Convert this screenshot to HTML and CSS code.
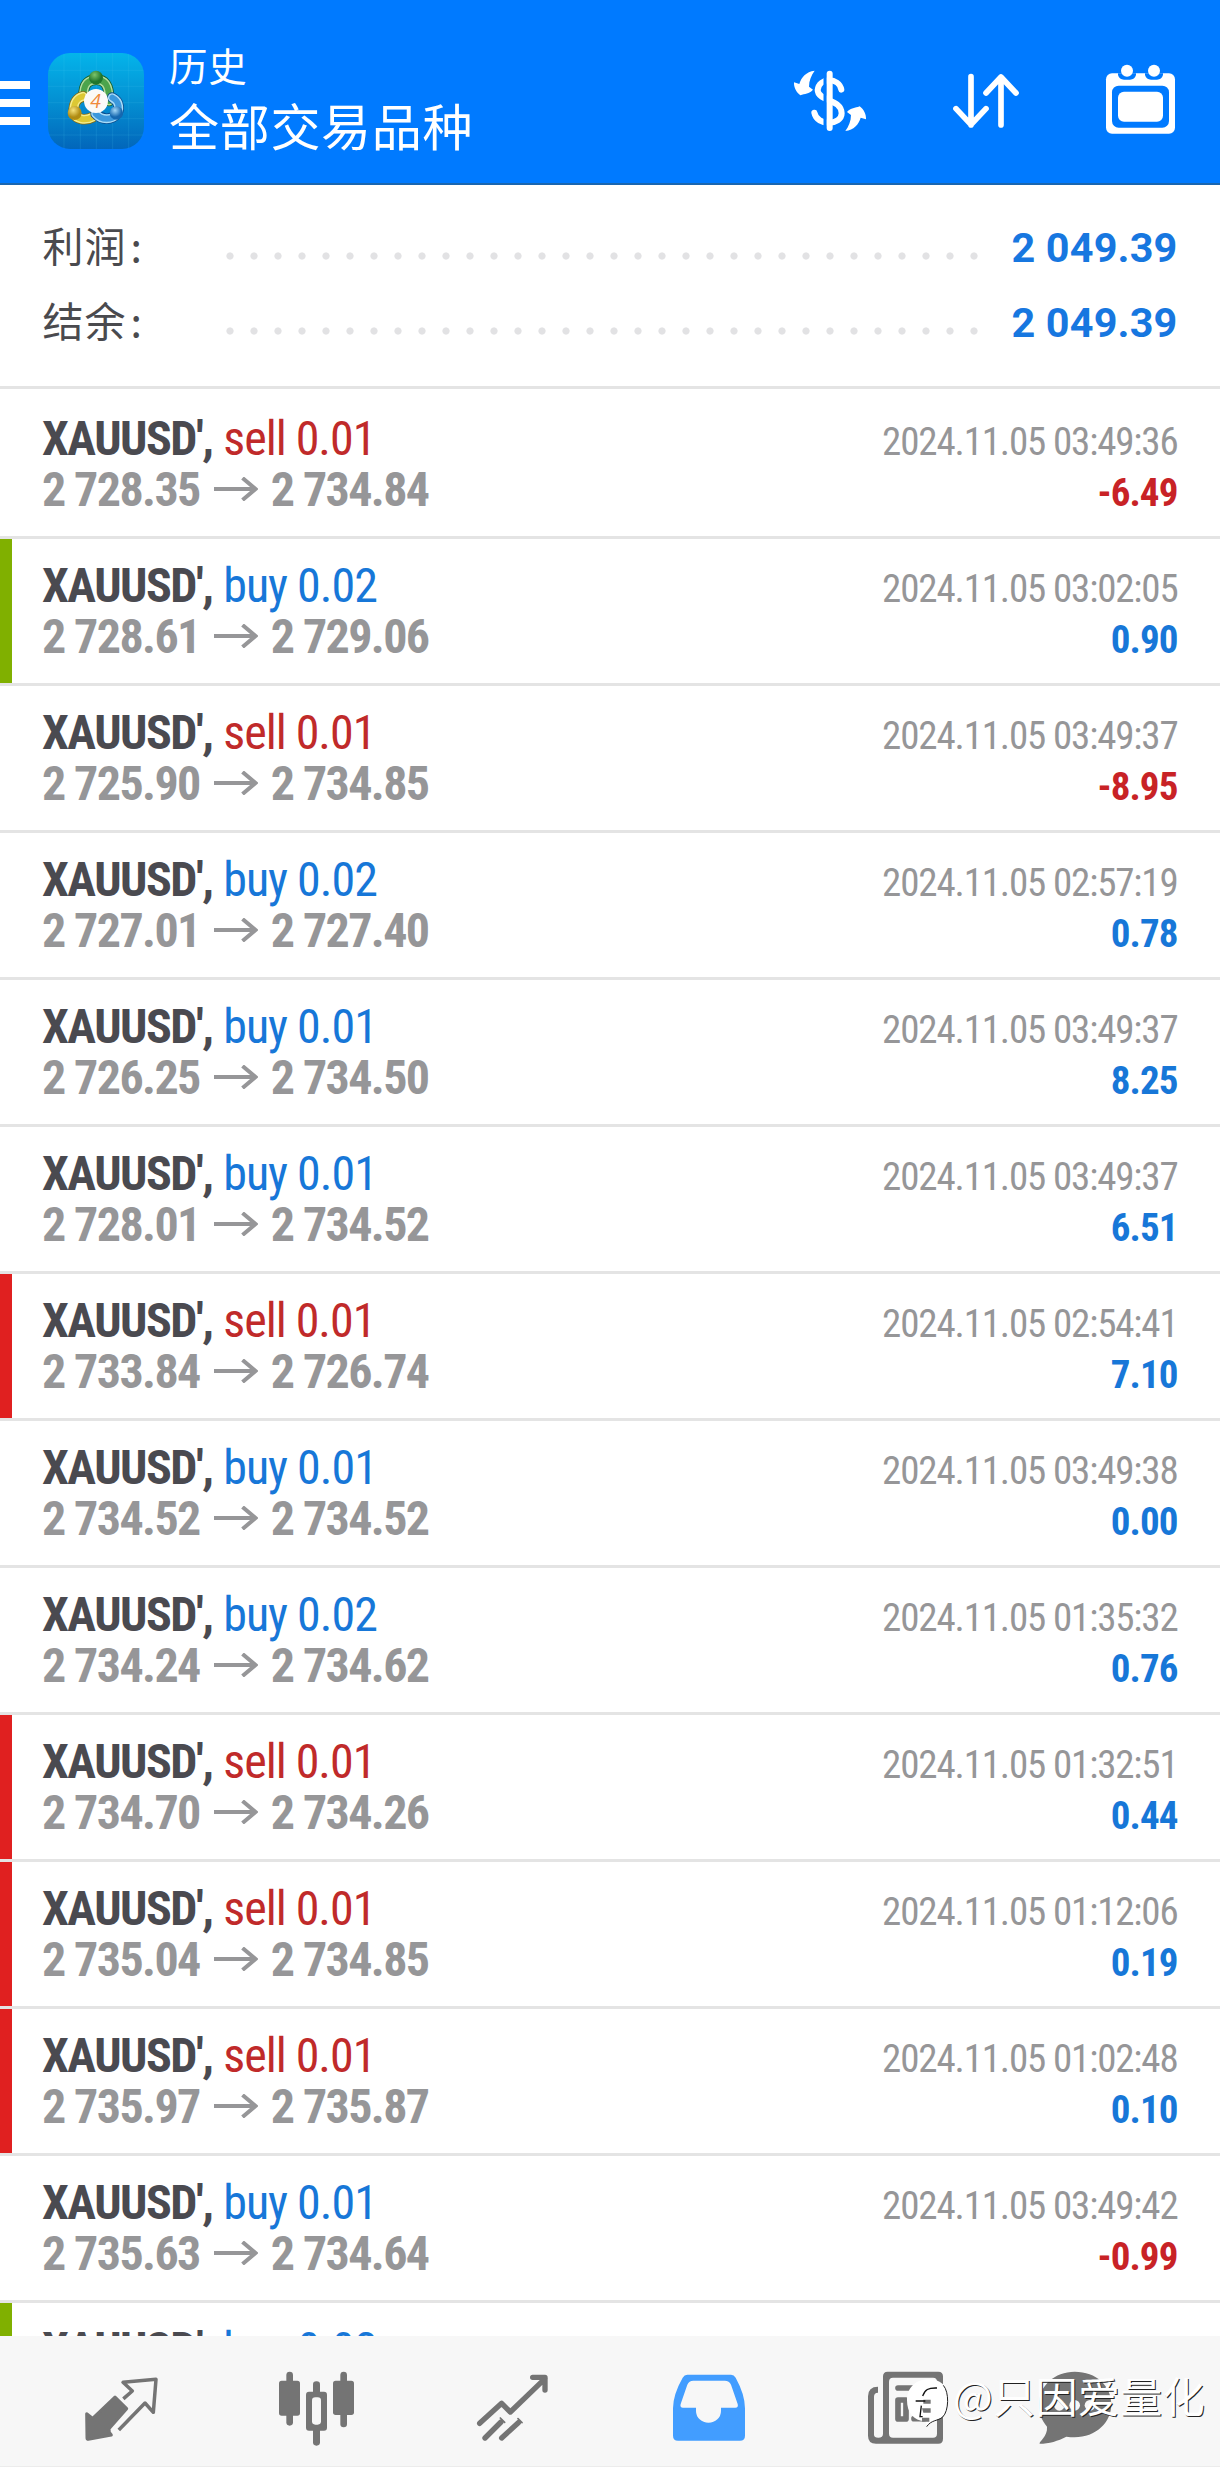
FILE: index.html
```html
<!DOCTYPE html>
<html lang="zh-CN">
<head>
<meta charset="utf-8">
<title>历史</title>
<link rel="stylesheet" href="styles.css">
</head>
<body>
<svg class="defs" width="0" height="0" aria-hidden="true">
  <symbol id="arrow" viewBox="0 0 44 24"><path d="M0 12H41M28.500 1L41.500 12L28.500 23" fill="none" stroke="#969698" stroke-width="4"/></symbol>
</svg>
<div class="app">
  <header class="topbar">
    <svg class="menu" width="30" height="44" viewBox="0 0 30 44"><path d="M0 0h30v8H0zM0 18h30v8H0zM0 36h30v8H0z" fill="#fff"/></svg>
    <svg class="logo" width="96" height="96" viewBox="145 158 288 288">
      <defs>
        <linearGradient id="bg" x1="0" y1="0" x2="0" y2="1"><stop offset="0" stop-color="#04b4ea"/><stop offset=".5" stop-color="#0490d2"/><stop offset="1" stop-color="#0266ba"/></linearGradient>
        <radialGradient id="gr" cx=".4" cy=".3"><stop offset="0" stop-color="#7cc46a"/><stop offset="1" stop-color="#20762c"/></radialGradient>
        <radialGradient id="ye" cx=".4" cy=".3"><stop offset="0" stop-color="#f6e27a"/><stop offset="1" stop-color="#b08c12"/></radialGradient>
        <radialGradient id="bl" cx=".4" cy=".3"><stop offset="0" stop-color="#a4d8f8"/><stop offset="1" stop-color="#1668b0"/></radialGradient>
      </defs>
      <rect x="145" y="158" width="288" height="288" rx="66" fill="url(#bg)"/>
      <path d="M193 160v284M242 158v288M290 158v288M339 158v288M387 160v284M147 210h284M145 258h288M145 307h288M145 355h288M147 404h284" stroke="#5cd0f4" stroke-opacity=".22" stroke-width="2"/>
      <g fill="none" stroke-linecap="round">
        <path d="M252 290C250 248 268 238 290 238S330 250 328 302" stroke="#14602a" stroke-width="32"/>
        <path d="M252 290C250 248 268 238 290 238S330 250 328 302" stroke="#b4dca0" stroke-width="27"/>
        <path d="M252 290C250 248 268 238 290 238S330 250 328 302" stroke="#4ca44c" stroke-width="18"/>
        <path d="M250 288C220 296 222 325 222 338C230 358 258 362 280 350" stroke="#806a10" stroke-width="32"/>
        <path d="M250 288C220 296 222 325 222 338C230 358 258 362 280 350" stroke="#f4ec8c" stroke-width="27"/>
        <path d="M250 288C220 296 222 325 222 338C230 358 258 362 280 350" stroke="#dcc834" stroke-width="18"/>
        <path d="M338 292C362 304 360 330 350 342C336 360 306 360 288 340" stroke="#0c4c8c" stroke-width="32"/>
        <path d="M338 292C362 304 360 330 350 342C336 360 306 360 288 340" stroke="#a8dcf8" stroke-width="27"/>
        <path d="M338 292C362 304 360 330 350 342C336 360 306 360 288 340" stroke="#3c98dc" stroke-width="18"/>
      </g>
      <circle cx="289" cy="232" r="21" fill="url(#gr)"/>
      <circle cx="225" cy="338" r="21" fill="url(#ye)"/>
      <circle cx="350" cy="338" r="20" fill="url(#bl)"/>
      <circle cx="289" cy="302" r="36" fill="#fbfaf8"/>
      <text class="logo-num" x="288" y="323" text-anchor="middle">4</text>
    </svg>
    <div class="heading">
      <div class="sub">历史</div>
      <div class="title">全部交易品种</div>
    </div>
    <div class="actions">
      <svg width="74" height="64" viewBox="100 207 222 192" fill="none">
        <path d="M245 269C238 231 178 232 174 270C174 304 246 296 246 340C246 376 172 380 164 338" stroke="#fff" stroke-width="18" stroke-linecap="round"/>
        <path d="M196.500 225V385" stroke="#007aff" stroke-width="10"/>
        <path d="M210 221V384" stroke="#fff" stroke-width="18" stroke-linecap="round"/>
        <path id="curl" d="M165 212C139 215 125 232 119 252L103 247C102 262 110 277 122 286C136 280 148 282 160 269L148 260C148 242 155 225 165 212Z" fill="#fff"/>
        <use href="#curl" transform="rotate(180 211 302.500)"/>
      </svg>
      <svg width="68" height="58" viewBox="576 216 204 174" fill="none" stroke="#fff" stroke-width="17" stroke-linecap="round" stroke-linejoin="round">
        <path d="M633 230V375M588 326L633 374L678 326M723 375V231M678 279L723 231L768 279"/>
      </svg>
      <svg class="calendar" width="71" height="71" viewBox="1035 193 213 213">
        <rect x="1038" y="221" width="207" height="181" rx="18" fill="#fff"/>
        <path d="M1074 221H1128V226Q1124 240 1110 240H1092Q1078 240 1074 226ZM1155 221H1209V226Q1205 240 1191 240H1173Q1159 240 1155 226Z" fill="#007aff"/>
        <circle cx="1101" cy="213" r="18" fill="#fff"/><circle cx="1182" cy="213" r="18" fill="#fff"/>
        <rect x="1056" y="258" width="171" height="126" rx="20" fill="#007aff"/>
        <rect x="1074" y="276" width="135" height="90" rx="18" fill="#fff"/>
      </svg>
    </div>
  </header>

  <section class="summary">
    <div class="sum"><span class="label">利润<i>:</i></span><span class="dots"></span><b>2 049.39</b></div>
    <div class="sum"><span class="label">结余<i>:</i></span><span class="dots"></span><b>2 049.39</b></div>
  </section>

  <main class="deals">
    <article class="deal"><div class="line"><p><b>XAUUSD',</b><span class="sell">sell 0.01</span></p><time>2024.11.05 03:49:36</time></div><div class="line"><p class="price">2 728.35<svg><use href="#arrow"/></svg>2 734.84</p><strong class="loss">-6.49</strong></div></article>
    <article class="deal tp"><div class="line"><p><b>XAUUSD',</b><span class="buy">buy 0.02</span></p><time>2024.11.05 03:02:05</time></div><div class="line"><p class="price">2 728.61<svg><use href="#arrow"/></svg>2 729.06</p><strong>0.90</strong></div></article>
    <article class="deal"><div class="line"><p><b>XAUUSD',</b><span class="sell">sell 0.01</span></p><time>2024.11.05 03:49:37</time></div><div class="line"><p class="price">2 725.90<svg><use href="#arrow"/></svg>2 734.85</p><strong class="loss">-8.95</strong></div></article>
    <article class="deal"><div class="line"><p><b>XAUUSD',</b><span class="buy">buy 0.02</span></p><time>2024.11.05 02:57:19</time></div><div class="line"><p class="price">2 727.01<svg><use href="#arrow"/></svg>2 727.40</p><strong>0.78</strong></div></article>
    <article class="deal"><div class="line"><p><b>XAUUSD',</b><span class="buy">buy 0.01</span></p><time>2024.11.05 03:49:37</time></div><div class="line"><p class="price">2 726.25<svg><use href="#arrow"/></svg>2 734.50</p><strong>8.25</strong></div></article>
    <article class="deal"><div class="line"><p><b>XAUUSD',</b><span class="buy">buy 0.01</span></p><time>2024.11.05 03:49:37</time></div><div class="line"><p class="price">2 728.01<svg><use href="#arrow"/></svg>2 734.52</p><strong>6.51</strong></div></article>
    <article class="deal sl"><div class="line"><p><b>XAUUSD',</b><span class="sell">sell 0.01</span></p><time>2024.11.05 02:54:41</time></div><div class="line"><p class="price">2 733.84<svg><use href="#arrow"/></svg>2 726.74</p><strong>7.10</strong></div></article>
    <article class="deal"><div class="line"><p><b>XAUUSD',</b><span class="buy">buy 0.01</span></p><time>2024.11.05 03:49:38</time></div><div class="line"><p class="price">2 734.52<svg><use href="#arrow"/></svg>2 734.52</p><strong>0.00</strong></div></article>
    <article class="deal"><div class="line"><p><b>XAUUSD',</b><span class="buy">buy 0.02</span></p><time>2024.11.05 01:35:32</time></div><div class="line"><p class="price">2 734.24<svg><use href="#arrow"/></svg>2 734.62</p><strong>0.76</strong></div></article>
    <article class="deal sl"><div class="line"><p><b>XAUUSD',</b><span class="sell">sell 0.01</span></p><time>2024.11.05 01:32:51</time></div><div class="line"><p class="price">2 734.70<svg><use href="#arrow"/></svg>2 734.26</p><strong>0.44</strong></div></article>
    <article class="deal sl"><div class="line"><p><b>XAUUSD',</b><span class="sell">sell 0.01</span></p><time>2024.11.05 01:12:06</time></div><div class="line"><p class="price">2 735.04<svg><use href="#arrow"/></svg>2 734.85</p><strong>0.19</strong></div></article>
    <article class="deal sl"><div class="line"><p><b>XAUUSD',</b><span class="sell">sell 0.01</span></p><time>2024.11.05 01:02:48</time></div><div class="line"><p class="price">2 735.97<svg><use href="#arrow"/></svg>2 735.87</p><strong>0.10</strong></div></article>
    <article class="deal"><div class="line"><p><b>XAUUSD',</b><span class="buy">buy 0.01</span></p><time>2024.11.05 03:49:42</time></div><div class="line"><p class="price">2 735.63<svg><use href="#arrow"/></svg>2 734.64</p><strong class="loss">-0.99</strong></div></article>
    <article class="deal tp"><div class="line"><p><b>XAUUSD',</b><span class="buy">buy 0.02</span></p></div></article>
  </main>

  <nav class="tabs">
    <svg class="quotes" width="75" height="75" viewBox="252 274 225 225">
      <path d="M345 352L380 387L327 447L328 458L334 466L265 479Q261 479 261 475L260 402L278 416Z" fill="#747474" stroke="#747474" stroke-width="9" stroke-linejoin="round"/>
      <path d="M374 354L397 334L369 308L468 299L460 398L435 370L360 447" fill="none" stroke="#747474" stroke-width="10.500" stroke-linejoin="round" stroke-linecap="square"/>
    </svg>
    <svg class="chart" width="77" height="75" viewBox="834 274 231 225" fill="#747474">
      <rect x="859" y="276" width="20" height="162" rx="10"/><rect x="837" y="303" width="63" height="105" rx="8"/>
      <rect x="1021" y="276" width="20" height="167" rx="10"/><rect x="999" y="303" width="63" height="103" rx="8"/>
      <rect x="939" y="305" width="21" height="193" rx="10"/><rect x="918" y="336" width="63" height="117" rx="9"/>
      <rect x="936" y="353" width="27" height="82" rx="10" fill="#f7f7f7"/>
    </svg>
    <svg class="trade" width="73" height="75" viewBox="228 274 219 225" fill="none" stroke="#747474" stroke-width="16" stroke-linecap="round" stroke-linejoin="round">
      <path d="M239 431L305 371L331 397L435 297M398 293H435V331M255 475L303 427M305 475L355 429"/>
      <path d="M301 415L314 428M354 417L366 429" stroke-width="5"/>
    </svg>
    <svg class="history" width="74" height="75" viewBox="816 274 222 225">
      <path d="M862 285H993Q1002 285 1007 294Q1035 345 1035 386V468Q1035 483 1020 483H834Q819 483 819 468V386Q819 345 848 294Q853 285 862 285Z" fill="#429dff"/>
      <path d="M880 303H974Q988 303 993 315L1013 373Q1016 384 1006 384H963V394A37 35 0 0 1 888 394V384H849Q839 384 842 373L862 315Q867 303 880 303Z" fill="#f7f7f7"/>
    </svg>
    <svg class="news" width="77" height="75" viewBox="201 274 231 225">
      <path d="M234 321V339Q222 339 222 351V465Q222 474 235 474Q249 474 249 462V290Q249 276 263 276H415Q429 276 429 290V477Q429 492 415 492H228Q204 492 204 468V350Q204 321 234 321Z" fill="#747474"/>
      <rect x="267" y="294" width="144" height="180" rx="12" fill="#f7f7f7"/>
      <path d="M294 325H385M294 361V418H318V361Z M342 363H385M342 390H385M342 417H385" fill="none" stroke="#747474" stroke-width="17" stroke-linecap="round" stroke-linejoin="round"/>
    </svg>
    <svg class="chat" width="74" height="75" viewBox="715 274 222 225">
      <path d="M825 276C890 276 935 318 935 374C935 435 877 484 800 471C775 484 748 492 720 492C716 487 745 470 742 441C725 420 718 402 718 374C718 318 765 276 825 276Z" fill="#747474"/>
      <g fill="#f7f7f7"><circle cx="779" cy="377" r="16"/><circle cx="825" cy="377" r="16"/><circle cx="871" cy="377" r="16"/></g>
    </svg>
  </nav>

  <div class="mark">
    <svg width="45" height="52" viewBox="135 50 135 156" fill="none">
      <path d="M205 57C240 57 263 75 264 110C264 150 262 172 222 181Q207 184 201 198L196 183C160 182 141 155 141 120C141 82 168 57 205 57Z" fill="#fff"/>
      <path d="M250 75C268 95 267 152 248 170C235 182 214 178 200 199" stroke="#222" stroke-width="3"/>
      <path d="M190 118H212V130H190ZM186 144H212V157H190ZM186 172H208V184H186Z" fill="#747474"/>
      <path d="M188 107C195 88 204 82 231 83M167 122H196M184 136L180 169H188" stroke="#111" stroke-width="4"/>
    </svg>
    <span>@只因爱量化</span>
  </div>
</div>
</body>
</html>
```
FILE: styles.css
```css
* { box-sizing: border-box; }
body { margin: 0; background: #fff; }
p { margin: 0; }
i { font-style: normal; }
svg { display: block; flex: none; }
.defs { position: absolute; }

.app {
  position: relative;
  display: flex;
  flex-direction: column;
  width: 1220px;
  height: 2467px;
  overflow: hidden;
  font-family: "Roboto", "Noto Sans CJK SC", sans-serif;
}

/* header */
.topbar {
  display: flex;
  align-items: center;
  flex: none;
  height: 185px;
  padding: 19px 44px 0 0;
  background: #007aff;
  border-bottom: 2px solid #1a66b0;
  color: #fff;
}
.menu { margin-top: 4px; }
.logo { margin-left: 18px; }
.logo-num { font: italic 500 58px "Open Sans", sans-serif; fill: #f08a3c; }
.heading {
  margin: 0 0 15px 25px;
  font-family: "Noto Sans CJK SC", sans-serif;
  white-space: nowrap;
}
.sub { font-size: 38.5px; line-height: 60px; letter-spacing: .8px; }
.title { font-size: 50px; line-height: 60px; letter-spacing: .7px; }
.actions { display: flex; align-items: center; gap: 85px; margin-left: auto; }
.calendar { margin-top: -3px; }

/* totals */
.summary {
  flex: none;
  height: 204px;
  padding: 22px 42.5px 0;
  border-bottom: 3px solid #e4e4e4;
}
.sum { display: flex; align-items: baseline; height: 75px; line-height: 75px; }
.label {
  width: 175.5px;
  color: #4a4a4e;
  font-family: "Noto Sans CJK SC", sans-serif;
  font-size: 41px;
  letter-spacing: 1px;
}
.label i { margin-left: 4px; }
.dots {
  align-self: flex-start;
  width: 768px;
  height: 8px;
  margin-top: 45px;
  background: radial-gradient(circle at 12px 4px, #e2e2e4 3.2px, transparent 4px) 0 0 / 24px 8px repeat-x;
}
.sum b { margin-left: auto; font-size: 41.4px; letter-spacing: .15px; color: #1777e0; }

/* deals */
.deals { flex: 1; min-height: 0; overflow: hidden; padding-top: 3px; }
.deal {
  display: flow-root;
  height: 147px;
  padding: 21px 42.5px 0 30px;
  border-bottom: 3px solid #e4e4e4;
  background: linear-gradient(var(--flag, transparent), var(--flag, transparent)) 0 0 / 12px 100% no-repeat;
  background-origin: border-box;
  background-clip: padding-box;
}
.tp { --flag: #80b000; }
.sl { --flag: #e02020; }
.line {
  display: flex;
  align-items: baseline;
  justify-content: space-between;
  height: 51px;
  padding-left: 12px;
  font-family: "Roboto Condensed", "Roboto", sans-serif;
  font-size: 48px;
  line-height: 51px;
  white-space: nowrap;
}
.line b { color: #4a4a50; letter-spacing: -1.5px; }
.buy, .sell { margin-left: 10.8px; letter-spacing: -1px; }
.buy { color: #1777d8; }
.sell { color: #c02a2a; }
.price { display: flex; color: #969698; font-weight: 700; letter-spacing: -1.6px; }
.price svg { width: 44px; height: 24px; margin: 13px 13px 0 14px; }
time { color: #969698; font-size: 39px; letter-spacing: -1.15px; }
.line strong { color: #1777d8; font-size: 39px; letter-spacing: -.9px; }
.line .loss { color: #c82226; }

/* bottom tabs */
.tabs {
  display: flex;
  flex: none;
  height: 131px;
  padding: 35px 0 0 84px;
  background: #f7f7f7;
  border-bottom: 1px solid #ececec;
}
.chart { margin-left: 119px; }
.trade { margin-left: 121px; }
.history { margin-left: 123px; }
.news { margin-left: 121px; }
.chat { margin-left: 94.300px; }

/* watermark over the tabs */
.mark {
  position: absolute;
  left: 905px;
  top: 2370px;
  display: flex;
  gap: 3px;
  color: #fff;
  font: 42px/50px "Noto Sans CJK SC", sans-serif;
  letter-spacing: .4px;
  text-shadow: 1px 1px 0 #222;
  white-space: nowrap;
}
.mark svg { margin-top: 7px; }
```
